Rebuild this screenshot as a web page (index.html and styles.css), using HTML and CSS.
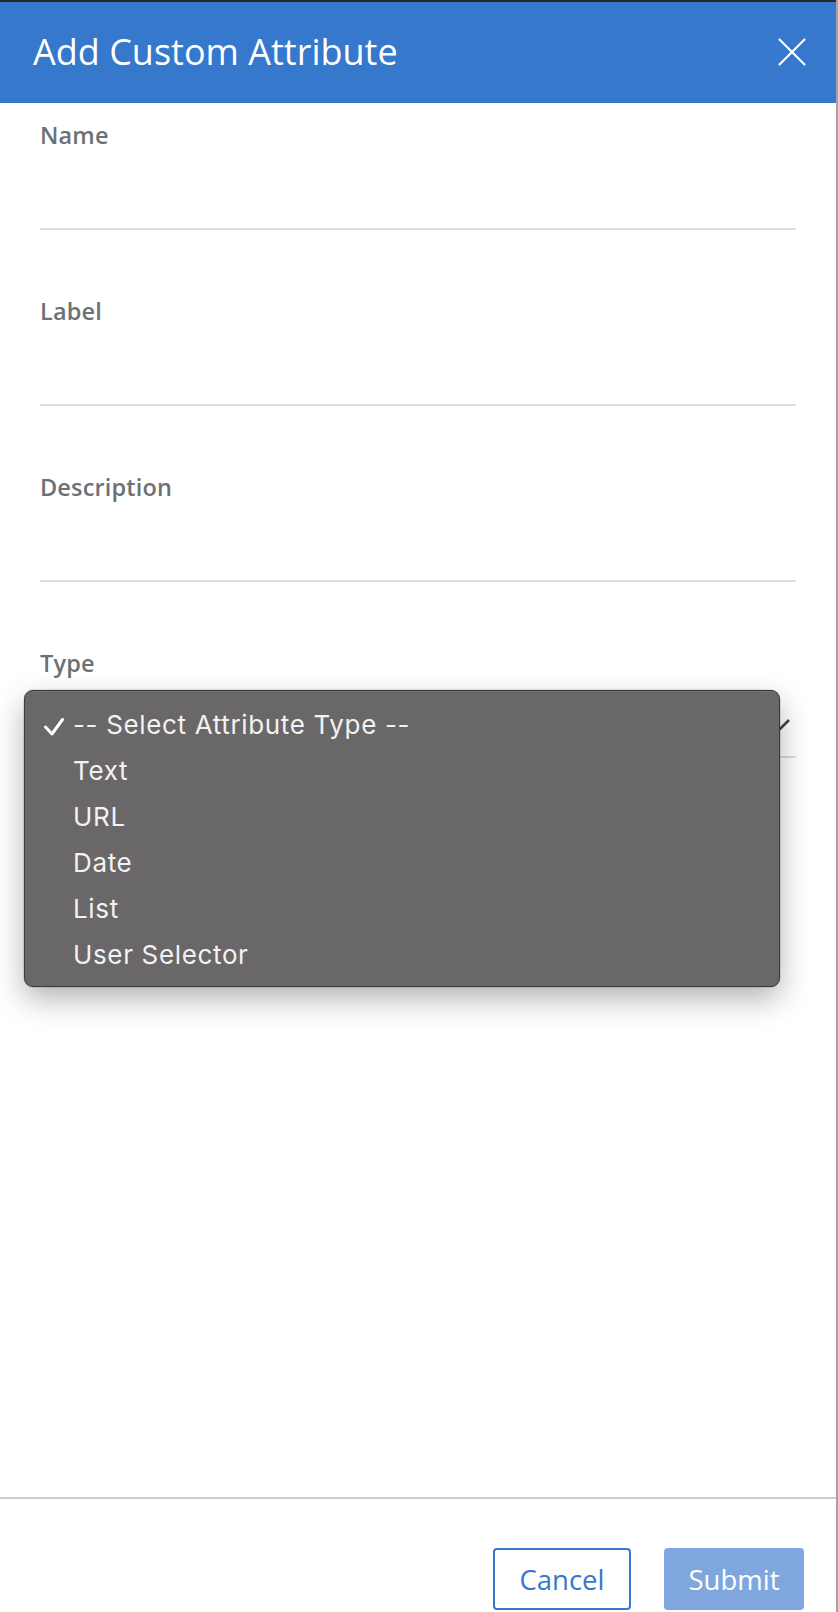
FILE: index.html
```html
<!DOCTYPE html>
<html>
<head>
<meta charset="utf-8">
<link rel="stylesheet" href="styles.css">
</head>
<body>
<div class="modal">
  <div class="topstrip"></div>
  <header class="header">
    <h1 class="title">Add Custom Attribute</h1>
    <button class="close" aria-label="Close">
      <svg width="28" height="28" viewBox="0 0 28 28"><path d="M1 1 L27 27 M27 1 L1 27" stroke="#fff" stroke-width="2.2" fill="none"/></svg>
    </button>
  </header>
  <main class="body">
    <div class="field">
      <label class="label">Name</label>
      <div class="input"></div>
    </div>
    <div class="field">
      <label class="label">Label</label>
      <div class="input"></div>
    </div>
    <div class="field">
      <label class="label">Description</label>
      <div class="input"></div>
    </div>
    <div class="field type-field">
      <label class="label">Type</label>
      <div class="input select">
        <svg class="chevron" width="20" height="12" viewBox="0 0 20 12"><path d="M1 1 L10 10 L19 1" stroke="#444" stroke-width="2.6" fill="none"/></svg>
      </div>
      <ul class="popup">
        <li class="opt selected"><svg class="check" width="20" height="18" viewBox="0 0 20 18"><path d="M1.5 9 L8 16 L18.5 1.5" stroke="#fff" stroke-width="3" fill="none" stroke-linecap="round" stroke-linejoin="round"/></svg>-- Select Attribute Type --</li>
        <li class="opt">Text</li>
        <li class="opt">URL</li>
        <li class="opt">Date</li>
        <li class="opt">List</li>
        <li class="opt">User Selector</li>
      </ul>
    </div>
  </main>
  <footer class="footer">
    <button class="btn btn-cancel">Cancel</button>
    <button class="btn btn-submit">Submit</button>
  </footer>
</div>
</body>
</html>
```
FILE: styles.css
```css
* { box-sizing: border-box; }
html, body { margin: 0; padding: 0; background: #fff; }
body {
  width: 838px;
  height: 1612px;
  overflow: hidden;
  font-family: "Open Sans", "Noto Sans", sans-serif;
}
.modal {
  width: 838px;
  height: 1612px;
  display: flex;
  flex-direction: column;
  border-right: 2px solid #a3a3a3;
  background: #fff;
}
.topstrip { height: 2px; background: #262626; flex: none; }
.header {
  flex: none;
  height: 101px;
  background: #3578cc;
  display: flex;
  align-items: center;
  justify-content: space-between;
  padding: 0 30px 2px 33px;
}
.title {
  margin: 0;
  font-weight: 400;
  font-size: 36px;
  color: #fff;
  line-height: 49px;
}
.close {
  border: 0;
  background: none;
  padding: 0;
  width: 28px;
  height: 28px;
  display: flex;
}
.body {
  flex: 1;
  padding: 16px 40px 0 40px;
}
.field {
  margin-bottom: 65px;
}
.label {
  display: block;
  font-size: 23.5px;
  font-weight: 600;
  line-height: 32px;
  color: #6d7175;
  letter-spacing: 0.15px;
}
.input {
  height: 79px;
  border-bottom: 2px solid #dddddd;
}
.type-field { position: relative; }
.select {
  display: flex;
  justify-content: flex-end;
  align-items: flex-start;
  padding-top: 40px;
  padding-right: 6px;
}
.popup {
  position: absolute;
  left: -16px;
  top: 43px;
  width: 756px;
  height: 297px;
  margin: 0;
  padding: 11px 0 9px 0;
  list-style: none;
  background: #696768;
  border: 1px solid #3a3a3a;
  border-radius: 9px;
  box-shadow: 0 12px 30px rgba(0,0,0,0.30), 0 0 0 0.5px rgba(0,0,0,0.2), inset 0 1px 0 rgba(255,255,255,0.08);
  font-family: Inter, "Liberation Sans", sans-serif;
}
.opt {
  height: 46px;
  line-height: 46px;
  font-size: 26px;
  letter-spacing: 0.65px;
  color: #f2f2f2;
  padding-left: 48px;
  position: relative;
  white-space: nowrap;
}
.check {
  position: absolute;
  left: 19px;
  top: 16px;
}
.footer {
  flex: none;
  height: 115px;
  border-top: 2px solid #cccccc;
  display: flex;
  justify-content: flex-end;
  align-items: flex-start;
  padding: 49px 32px 0 0;
  gap: 33px;
}
.btn {
  height: 62px;
  border-radius: 4px;
  font-family: "Open Sans", "Noto Sans", sans-serif;
  font-size: 27.5px;
  font-weight: 400;
  padding: 0;
  display: flex;
  align-items: center;
  justify-content: center;
}
.btn-cancel {
  width: 138px;
  background: #fff;
  border: 2px solid #3578cc;
  color: #3578cc;
}
.btn-submit {
  width: 140px;
  background: #80a7dd;
  border: 0;
  color: #fff;
}
```
